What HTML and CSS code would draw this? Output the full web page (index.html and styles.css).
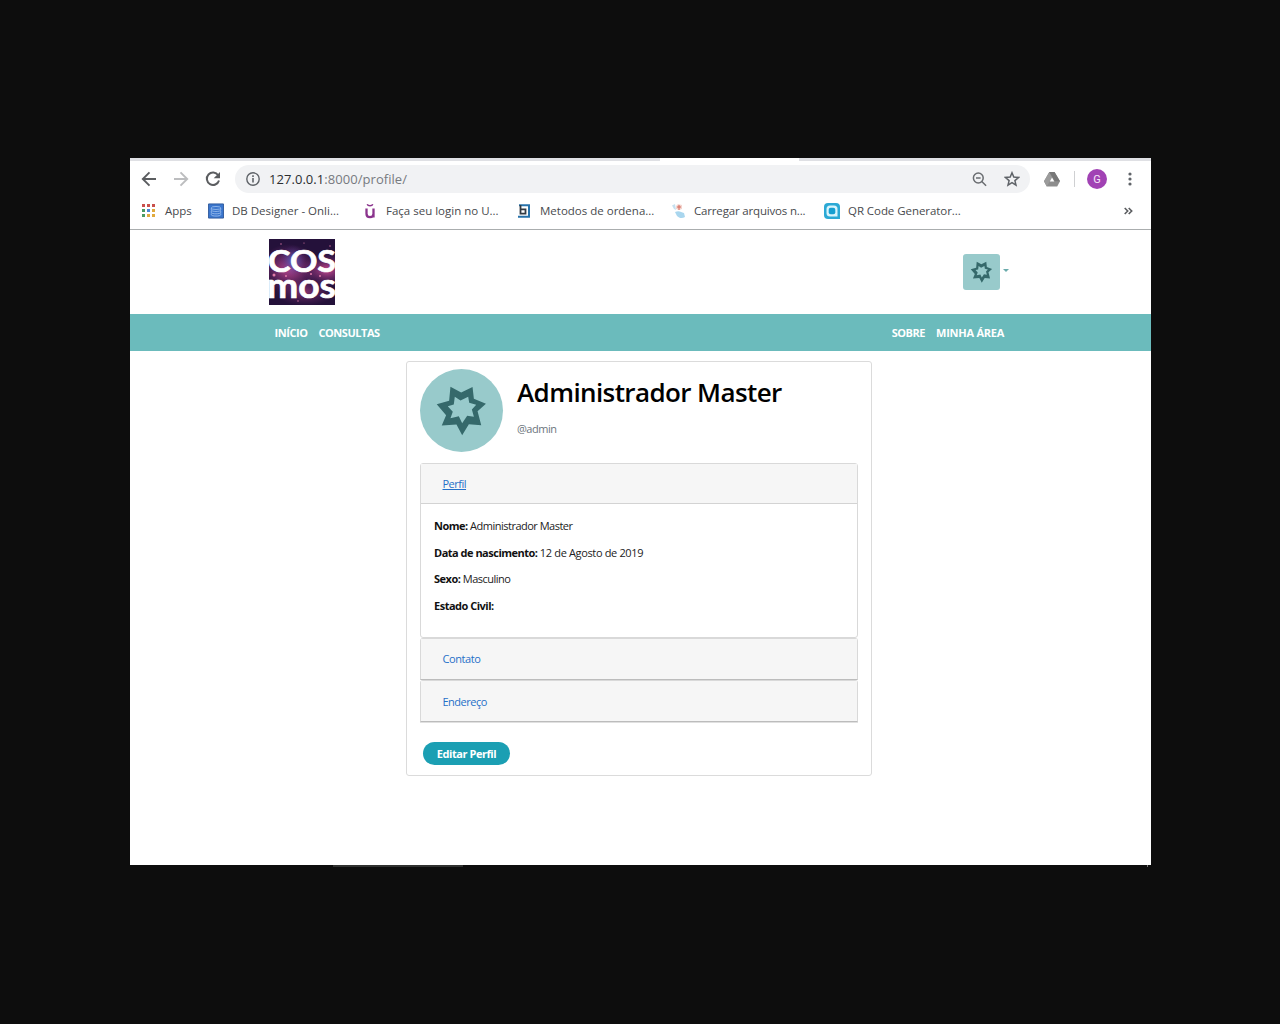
FILE: index.html
```html
<!DOCTYPE html>
<html lang="pt-BR">
<head>
<meta charset="utf-8">
<title>Cosmos</title>
<link rel="stylesheet" href="styles.css">
</head>
<body>
<svg width="0" height="0" class="defs" aria-hidden="true">
  <symbol id="star" viewBox="61 42 248 248">
    <path fill="#35696b" fill-rule="evenodd" d="M152 95 184 112 218 96 222 131 258 146 233 168 244 210 207 207 187 240 170 208 126 211 139 180 111 147 148 137ZM165 125 182 136 205 125 208 143 229 149 216 163 222 185 202 182 187 204 177 183 152 189 159 170 144 153 162 148Z"/>
  </symbol>
</svg>
<div class="window">
  <div class="tabs"><div class="tab"></div></div>
  <div class="toolbar">
    <svg class="back" width="16" height="16" viewBox="0 0 16 16"><path d="M15 8H2M8.500 1.300 1.800 8l6.700 6.700" fill="none" stroke="#5b5d60" stroke-width="1.900"/></svg>
    <svg class="forward" width="16" height="16" viewBox="0 0 16 16"><path d="M1 8h13M7.500 1.300 14.200 8l-6.700 6.700" fill="none" stroke="#bcbdbf" stroke-width="1.900"/></svg>
    <svg class="reload" width="16" height="16" viewBox="0 0 16 16"><path d="M13.200 4.300A6.200 6.200 0 1 0 14 9.500" fill="none" stroke="#5b5d60" stroke-width="2"/><path d="M15 1v6.300H8.700z" fill="#5b5d60"/></svg>
    <div class="omnibox">
      <svg width="14" height="14" viewBox="0 0 14 14"><circle cx="7" cy="7" r="6.200" fill="none" stroke="#5f6368" stroke-width="1.400"/><path d="M7 6v4.500M7 3.300v1.600" stroke="#5f6368" stroke-width="1.600"/></svg>
      <span class="url">127.0.0.1<span>:8000/profile/</span></span>
      <svg class="lens" width="15" height="15" viewBox="0 0 15 15"><g fill="none" stroke="#6a6d71" stroke-width="1.500"><circle cx="6.300" cy="6" r="4.900"/><path d="M4 6h4.600M9.800 9.500l4.300 4.300"/></g></svg>
      <svg width="16" height="16" viewBox="0 0 16 16"><path d="m8 1.800 1.800 4.300 4.700.4-3.600 3.100 1.100 4.600L8 11.700l-4 2.500 1.100-4.600L1.500 6.500l4.700-.4z" fill="none" stroke="#5f6368" stroke-width="1.500"/></svg>
    </div>
    <svg class="drive" width="16" height="15" viewBox="0 0 16 15"><path d="M5.300 0h5.200L16 9.200l-2.800 5.300H2.800L0 9.200z" fill="#8d8d8d"/><path d="M5.300 0 0 9.200l2.800 5.300L8 5.200z" fill="#9b9b9b"/><path d="M5.300 0h5.200L16 9.200h-5.300z" fill="#777"/><path d="m8 5.500 2.300 3.900H5.800z" fill="#fff"/></svg>
    <span class="rule"></span>
    <span class="account">G</span>
    <svg width="4" height="14" viewBox="0 0 4 14"><g fill="#5f6368"><circle cx="2" cy="2" r="1.600"/><circle cx="2" cy="7" r="1.600"/><circle cx="2" cy="12" r="1.600"/></g></svg>
  </div>
  <div class="bookmarks">
    <div class="bm apps"><svg width="15" height="14" viewBox="0 0 15 14"><path fill="#c9504c" d="M1 0h3v3H1zM6 0h3v3H6zM11 0h3v3h-3z"/><path fill="#4a9a62" d="M1 5h3v3H1z"/><path fill="#4a86d8" d="M6 5h3v3H6z"/><path fill="#e0aa3e" d="M11 5h3v3h-3zM6 10h3v3H6zM11 10h3v3h-3z"/><path fill="#4a9a62" d="M1 10h3v3H1z"/></svg><span>Apps</span></div>
    <div class="bm designer"><svg width="16" height="16" viewBox="0 0 17 16"><path fill="#3975cd" stroke="#315b9c" d="M.5.500h16v15H.500z"/><g fill="none" stroke="#a9c8f2" stroke-width=".8"><ellipse cx="8.500" cy="4.800" rx="5" ry="1.600"/><path d="M3.500 5v2c0 2 10 2 10 0V5M3.500 8v1.500c0 2 10 2 10 0V8M3.500 10.500V12c0 1.800 10 1.800 10 0v-1.500"/></g></svg><span>DB Designer - Onli...</span></div>
    <div class="bm"><svg width="16" height="16" viewBox="0 0 16 16"><g fill="none" stroke="#8b348d"><path stroke-width="2.300" d="M4.500 5.500v5.200c0 4.500 7 4.500 7 0V5.500M11.500 9v5.500"/><path stroke-width="1.500" d="M5.200 1.300c.8 2 4.800 2 5.600 0"/></g></svg><span>Faça seu login no U...</span></div>
    <div class="bm"><svg width="16" height="16" viewBox="0 0 16 16"><path d="M3 2.300h10v11.500H2" fill="none" stroke="#2772aa" stroke-width="2"/><path d="M4.500 2v8.700h5V6.300h-5" fill="none" stroke="#333a42" stroke-width="1.800"/></svg><span>Metodos de ordena...</span></div>
    <div class="bm upload"><svg width="16" height="16" viewBox="0 0 16 16"><path d="M1 2.500 4 1l1 6-2-1z" fill="#c5e0ef"/><path d="M5 3 7 1l4 1v4L8 7 5 6z" fill="#f3d5cf"/><path d="M6 4h4M8 2v5" stroke="#d4695a"/><path d="M4 9c4-2 6 0 9 1l1 4c-3 2-6 1-8-1z" fill="#a9d6ee"/></svg><span>Carregar arquivos n...</span></div>
    <div class="bm qr"><svg width="16" height="16" viewBox="0 0 16 16"><path d="M4 0h8a4 4 0 0 1 4 4v12H4a4 4 0 0 1-4-4V4a4 4 0 0 1 4-4z" fill="#2ba9d5"/><path d="M6 2.500h4A3.500 3.500 0 0 1 13.500 6v7.500H6A3.500 3.500 0 0 1 2.500 10V6A3.500 3.500 0 0 1 6 2.500z" fill="#d8f4fc"/><rect x="4.700" y="4.700" width="6.600" height="6.600" rx="2" fill="#169fd1"/></svg><span>QR Code Generator...</span></div>
    <svg class="more" width="9" height="8" viewBox="0 0 9 8"><path d="m.7 1 3 3-3 3M4.700 1l3 3-3 3" fill="none" stroke="#5b5d60" stroke-width="1.600"/></svg>
  </div>
  <header class="site-header">
    <svg class="logo" width="66" height="66" viewBox="0 0 66 66">
      <defs>
        <radialGradient id="pink"><stop stop-color="#c84a91"/><stop offset="1" stop-color="#7a2c77" stop-opacity="0"/></radialGradient>
        <radialGradient id="blue"><stop stop-color="#5367c3"/><stop offset="1" stop-color="#4c2b79" stop-opacity="0"/></radialGradient>
      </defs>
      <path fill="#24113a" d="M0 0h66v66H0z"/>
      <ellipse cx="20" cy="30" rx="30" ry="25" fill="url(#pink)"/>
      <ellipse cx="58" cy="31" rx="25" ry="17" fill="url(#pink)"/>
      <ellipse cx="24" cy="22" rx="13" ry="16" fill="url(#blue)"/>
      <ellipse cx="36" cy="53" rx="30" ry="14" fill="url(#pink)" opacity=".6"/>
      <g fill="#e07ba8"><circle cx="5" cy="36" r="1.500"/><circle cx="17" cy="37" r="1"/><circle cx="42" cy="35" r="1"/><circle cx="51" cy="37" r="1"/><circle cx="61" cy="7" r=".7"/><circle cx="12" cy="5" r=".7"/><circle cx="35" cy="4" r=".6"/><circle cx="29" cy="62" r=".7"/></g>
      <text class="logo-text" x="-1" y="33" font-size="31" textLength="68" lengthAdjust="spacingAndGlyphs">COS</text>
      <text class="logo-text" x="-2" y="59" font-size="35" textLength="69" lengthAdjust="spacingAndGlyphs">mos</text>
    </svg>
    <div class="user"><svg width="37" height="36"><use href="#star"/></svg><span class="caret"></span></div>
  </header>
  <nav class="site-nav">
    <a>INÍCIO</a><a class="n2">CONSULTAS</a><a class="n3">SOBRE</a><a class="n4">MINHA ÁREA</a>
  </nav>
  <main class="card">
    <div class="profile">
      <svg class="avatar" width="83" height="83"><use href="#star"/></svg>
      <div><h1>Administrador Master</h1><p class="handle">@admin</p></div>
    </div>
    <section class="panel open">
      <div class="panel-head"><a class="active">Perfil</a></div>
      <div class="panel-body">
        <p><b>Nome:</b> Administrador Master</p>
        <p><b>Data de nascimento:</b> <span class="date">12 de Agosto de 2019</span></p>
        <p><b>Sexo:</b> Masculino</p>
        <p><b>Estado Civil:</b></p>
      </div>
    </section>
    <section class="panel closed contact"><div class="panel-head"><a>Contato</a></div></section>
    <section class="panel closed last"><div class="panel-head"><a>Endereço</a></div></section>
    <button class="edit">Editar Perfil</button>
  </main>
</div>
<div class="below"><span></span><i></i></div>
</body>
</html>
```
FILE: styles.css
```css
* { box-sizing: border-box; }
body {
  margin: 0;
  height: 1024px;
  overflow: hidden;
  padding: 158px 129px 0 130px;
  background: #0d0d0d;
  font-family: "Open Sans", "Noto Sans", sans-serif;
  white-space: nowrap;
}
svg { display: block; flex: none; }
.defs { position: absolute; }
.window { height: 707px; background: #fff; overflow: hidden; }
.tabs { height: 3px; background: #dfe0e4; }
.tab { width: 139px; height: 3px; margin-left: 530px; background: #fff; }

.toolbar { height: 36px; display: flex; align-items: center; padding-left: 11px; }
.forward { margin-left: 16px; }
.reload { margin-left: 16px; }
.omnibox {
  width: 795px; height: 28px; margin-left: 14px; padding: 0 10px 0 11px;
  display: flex; align-items: center;
  border-radius: 14px; background: #f1f2f4;
}
.url { margin-left: 9px; font-size: 13px; color: #2c2e31; letter-spacing: .05px; }
.url span { color: #777a7f; }
.lens { margin-left: auto; margin-right: 17px; }
.drive { margin-left: 14px; }
.rule { width: 1px; height: 16px; margin: 0 12px 0 14px; background: #cfd0d2; }
.account {
  width: 20px; height: 20px; margin-right: 20.500px; border-radius: 50%;
  background: #a142b4; color: #f6e6f8;
  font: 11px/21px Roboto, sans-serif; text-align: center;
}

.bookmarks {
  height: 33px; padding: 0 18px 5px 11px;
  display: grid; grid-template-columns: 67px 154px 154px 155px 153px 170px 1fr;
  align-items: center;
  border-bottom: 1px solid #aaadae;
  font-size: 11.500px; color: #484a4d;
}
.bm { display: flex; align-items: center; gap: 8px; }
.apps { gap: 9px; }
.upload { letter-spacing: -.17px; gap: 7px; }
.qr { letter-spacing: -.06px; }
.more { justify-self: end; }

.site-header { height: 84px; padding: 0 142px 0 139px; display: flex; align-items: center; justify-content: space-between; }
.logo-text { font-family: Lato, sans-serif; font-weight: 700; fill: #fff; stroke: #fff; stroke-width: .7px; }
.user { display: flex; align-items: center; gap: 3px; }
.user svg { background: #98cacb; border-radius: 3px; }
.caret { border: 3px solid transparent; border-top-color: #6aabac; border-bottom: 0; margin-bottom: 3px; }
.site-nav {
  height: 37px; padding: 0 147px 0 144.500px; display: flex; align-items: center;
  background: #6bbbbc; color: #fff; font-size: 11px; font-weight: 700;
  letter-spacing: -.45px;
}
.n2 { margin-left: 11px; }
.n3 { margin-left: auto; }
.n4 { margin-left: 11px; letter-spacing: -.25px; }

.card {
  width: 466px; height: 415px; margin: 10px 0 0 276px; padding: 7px 13px 0;
  border: 1px solid #dbdbdb; border-radius: 3px;
}
.profile { display: flex; gap: 14px; height: 94px; }
.avatar { border-radius: 50%; background: #98cacb; }
h1 { margin: 5px 0 0; font-size: 26px; line-height: 36px; font-weight: 600; letter-spacing: -.6px; color: #000; }
.handle { margin: 9px 0 0; font-size: 11px; line-height: 20px; letter-spacing: -.5px; color: #6c757d; }
.panel { border: 1px solid #d9d9d9; font-size: 11px; letter-spacing: -.5px; }
.panel-head { background: #f6f6f6; padding-left: 21.500px; display: flex; align-items: center; }
.panel-head a { color: #2670c8; }
.panel-head .active { text-decoration: underline; }
.open { height: 175px; border-radius: 3px; }
.open .panel-head { height: 40px; border-bottom: 1px solid #d3d3d3; }
.panel-body { padding: 8px 13px; color: #222; }
.panel-body p { margin: 0; height: 26.700px; line-height: 27px; }
.panel-body b { color: #111; }
.date { letter-spacing: -.35px; }
.closed { height: 42px; border-bottom-color: #bcbcbc; border-radius: 3px 3px 0 0; }
.closed .panel-head { height: 40px; }
.contact .panel-head { padding-bottom: 2px; letter-spacing: -.4px; }
.last { box-shadow: 0 1px #e0e0e0; }
.edit {
  display: block; width: 87px; height: 23px; margin: 20px 0 0 3px; padding: 0;
  border: 0; border-radius: 12px; background: #1b9fb3; color: #fff;
  font: 700 11px/23px "Open Sans", sans-serif; letter-spacing: -.45px;
}
.below { display: flex; justify-content: space-between; padding: 0 3px 0 203px; height: 2px; }
.below span { width: 130px; background: #303130; }
.below i { width: 1px; background: #777; }
```
